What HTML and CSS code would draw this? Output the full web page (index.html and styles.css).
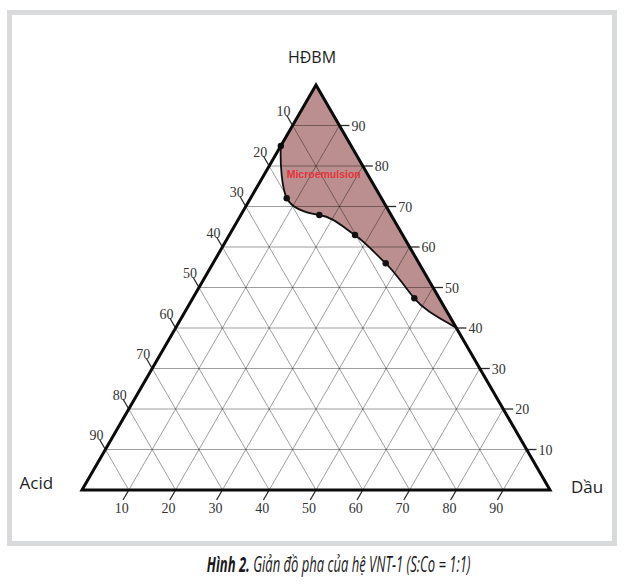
FILE: index.html
```html
<!DOCTYPE html>
<html lang="vi">
<head>
<meta charset="utf-8">
<title>Hình 2. Giản đồ pha của hệ VNT-1</title>
<link rel="stylesheet" href="styles.css">
</head>
<body>
<div class="figure">
  <svg class="diagram" width="600" height="526" viewBox="12 15 600 526" xmlns="http://www.w3.org/2000/svg">
    <!-- microemulsion region -->
    <path class="region" d="M 316 85 L 456.4 328 C 440 318, 425 311, 414.3 298.3 C 404 286, 396 273, 385.7 263.3 C 376 254, 366 243, 355 235 C 343 227, 333 217, 319.3 215 C 305 213, 292 208, 286.7 198.3 C 282 188, 280 165, 280.8 146 Z"/>

    <g class="grid">
      <!-- horizontal lines (HĐBM) -->
      <line x1="105.4" y1="449.5" x2="526.6" y2="449.5"/>
      <line x1="128.8" y1="409" x2="503.2" y2="409"/>
      <line x1="152.2" y1="368.5" x2="479.8" y2="368.5"/>
      <line x1="175.6" y1="328" x2="456.4" y2="328"/>
      <line x1="199" y1="287.5" x2="433" y2="287.5"/>
      <line x1="222.4" y1="247" x2="409.6" y2="247"/>
      <line x1="245.8" y1="206.5" x2="386.2" y2="206.5"/>
      <line x1="269.2" y1="166" x2="362.8" y2="166"/>
      <line x1="292.6" y1="125.5" x2="339.4" y2="125.5"/>
      <!-- lines parallel to left side (Dầu) -->
      <line x1="128.8" y1="490" x2="339.4" y2="125.5"/>
      <line x1="175.6" y1="490" x2="362.8" y2="166"/>
      <line x1="222.4" y1="490" x2="386.2" y2="206.5"/>
      <line x1="269.2" y1="490" x2="409.6" y2="247"/>
      <line x1="316" y1="490" x2="433" y2="287.5"/>
      <line x1="362.8" y1="490" x2="456.4" y2="328"/>
      <line x1="409.6" y1="490" x2="479.8" y2="368.5"/>
      <line x1="456.4" y1="490" x2="503.2" y2="409"/>
      <line x1="503.2" y1="490" x2="526.6" y2="449.5"/>
      <!-- lines parallel to right side (Acid) -->
      <line x1="292.6" y1="125.5" x2="503.2" y2="490"/>
      <line x1="269.2" y1="166" x2="456.4" y2="490"/>
      <line x1="245.8" y1="206.5" x2="409.6" y2="490"/>
      <line x1="222.4" y1="247" x2="362.8" y2="490"/>
      <line x1="199" y1="287.5" x2="316" y2="490"/>
      <line x1="175.6" y1="328" x2="269.2" y2="490"/>
      <line x1="152.2" y1="368.5" x2="222.4" y2="490"/>
      <line x1="128.8" y1="409" x2="175.6" y2="490"/>
      <line x1="105.4" y1="449.5" x2="128.8" y2="490"/>
    </g>

    <g class="ticks">
      <!-- right ticks -->
      <line x1="339.4" y1="125.5" x2="349.4" y2="125.5"/>
      <line x1="362.8" y1="166" x2="372.8" y2="166"/>
      <line x1="386.2" y1="206.5" x2="396.2" y2="206.5"/>
      <line x1="409.6" y1="247" x2="419.6" y2="247"/>
      <line x1="433" y1="287.5" x2="443" y2="287.5"/>
      <line x1="456.4" y1="328" x2="466.4" y2="328"/>
      <line x1="479.8" y1="368.5" x2="489.8" y2="368.5"/>
      <line x1="503.2" y1="409" x2="513.2" y2="409"/>
      <line x1="526.6" y1="449.5" x2="536.6" y2="449.5"/>
      <!-- bottom ticks -->
      <line x1="128.8" y1="490" x2="123" y2="500"/>
      <line x1="175.6" y1="490" x2="169.8" y2="500"/>
      <line x1="222.4" y1="490" x2="216.6" y2="500"/>
      <line x1="269.2" y1="490" x2="263.4" y2="500"/>
      <line x1="316" y1="490" x2="310.2" y2="500"/>
      <line x1="362.8" y1="490" x2="357" y2="500"/>
      <line x1="409.6" y1="490" x2="403.8" y2="500"/>
      <line x1="456.4" y1="490" x2="450.6" y2="500"/>
      <line x1="503.2" y1="490" x2="497.4" y2="500"/>
      <!-- left ticks -->
      <line x1="292.6" y1="125.5" x2="286.8" y2="115.5"/>
      <line x1="269.2" y1="166" x2="263.4" y2="156"/>
      <line x1="245.8" y1="206.5" x2="240" y2="196.5"/>
      <line x1="222.4" y1="247" x2="216.6" y2="237"/>
      <line x1="199" y1="287.5" x2="193.2" y2="277.5"/>
      <line x1="175.6" y1="328" x2="169.8" y2="318"/>
      <line x1="152.2" y1="368.5" x2="146.4" y2="358.5"/>
      <line x1="128.8" y1="409" x2="123" y2="399"/>
      <line x1="105.4" y1="449.5" x2="99.6" y2="439.5"/>
    </g>

    <!-- phase boundary -->
    <path class="boundary" d="M 456.4 328 C 440 318, 425 311, 414.3 298.3 C 404 286, 396 273, 385.7 263.3 C 376 254, 366 243, 355 235 C 343 227, 333 217, 319.3 215 C 305 213, 292 208, 286.7 198.3 C 282 188, 280 165, 280.8 146"/>
    <g class="dots">
      <circle cx="280.8" cy="146" r="3.2"/>
      <circle cx="286.7" cy="198.3" r="3.2"/>
      <circle cx="319.3" cy="215" r="3.2"/>
      <circle cx="355" cy="235" r="3.2"/>
      <circle cx="385.7" cy="263.3" r="3.2"/>
      <circle cx="414.3" cy="298.3" r="3.2"/>
    </g>

    <!-- outer triangle -->
    <polygon class="frame-tri" points="82,490 550,490 316,85"/>

    <text class="region-label" x="323.7" y="178">Microemulsion</text>

    <g class="num num-right">
      <text x="351.4" y="130.5">90</text>
      <text x="374.8" y="171">80</text>
      <text x="398.2" y="211.5">70</text>
      <text x="421.6" y="252">60</text>
      <text x="445" y="292.5">50</text>
      <text x="468.4" y="333">40</text>
      <text x="491.8" y="373.5">30</text>
      <text x="515.2" y="414">20</text>
      <text x="538.6" y="454.5">10</text>
    </g>
    <g class="num num-mid">
      <text x="121.8" y="513">10</text>
      <text x="168.6" y="513">20</text>
      <text x="215.4" y="513">30</text>
      <text x="262.2" y="513">40</text>
      <text x="309" y="513">50</text>
      <text x="355.8" y="513">60</text>
      <text x="402.6" y="513">70</text>
      <text x="449.4" y="513">80</text>
      <text x="496.2" y="513">90</text>
      <text x="283.6" y="116">10</text>
      <text x="260.2" y="156.5">20</text>
      <text x="236.8" y="197">30</text>
      <text x="213.4" y="237.5">40</text>
      <text x="190" y="278">50</text>
      <text x="166.6" y="318.5">60</text>
      <text x="143.2" y="359">70</text>
      <text x="119.8" y="399.5">80</text>
      <text x="96.4" y="440">90</text>
    </g>

    <text class="axis axis-top" x="312" y="62.5">HĐBM</text>
    <text class="axis" x="19.5" y="488.5">Acid</text>
    <text class="axis" x="571" y="492.5">Dầu</text>
  </svg>
</div>
<p class="caption"><span class="caption-inner"><b class="caption-num">Hình 2.</b> Giản đồ pha của hệ VNT-1 (S:Co = 1:1)</span></p>
</body>
</html>
```

FILE: styles.css
```css
html, body {
  margin: 0;
  padding: 0;
  background: #ffffff;
}

.figure {
  margin: 10px 0 0 7px;
  width: 610px;
  height: 536px;
  box-sizing: border-box;
  border: 5px solid #d9dadb;
  background: #ffffff;
}

.diagram {
  display: block;
}

.region {
  fill: #bb8f8f;
  stroke: none;
}

.grid line {
  stroke: #000000;
  stroke-opacity: 0.38;
  stroke-width: 1;
}

.ticks line {
  stroke: #2a2a2a;
  stroke-width: 1.3;
}

.boundary {
  fill: none;
  stroke: #111111;
  stroke-width: 1.8;
}

.dots circle {
  fill: #111111;
}

.frame-tri {
  fill: none;
  stroke: #0a0a0a;
  stroke-width: 3;
  stroke-linejoin: miter;
}

.region-label {
  font-family: "Liberation Sans", Arial, sans-serif;
  font-weight: 700;
  font-size: 10.5px;
  fill: #e3343c;
  text-anchor: middle;
}

.num text {
  font-family: "Liberation Serif", "Times New Roman", serif;
  font-size: 14px;
  fill: #333333;
}

.num-mid text {
  text-anchor: middle;
}

.axis {
  font-family: "Open Sans", "Noto Sans", sans-serif;
  font-size: 17px;
  fill: #1e1e1e;
}

.axis-top {
  font-size: 16px;
  text-anchor: middle;
}

.caption {
  margin: 5px 0 0 0;
  padding-left: 54px;
  width: 570px;
  text-align: center;
  font-family: "Open Sans", "Noto Sans", sans-serif;
  font-style: italic;
  font-size: 21px;
  line-height: 26px;
  color: #1a1a1a;
}

.caption-inner {
  display: inline-block;
  transform: scaleX(0.62);
  transform-origin: center;
  white-space: nowrap;
}

.caption-num {
  font-weight: 700;
}
```
